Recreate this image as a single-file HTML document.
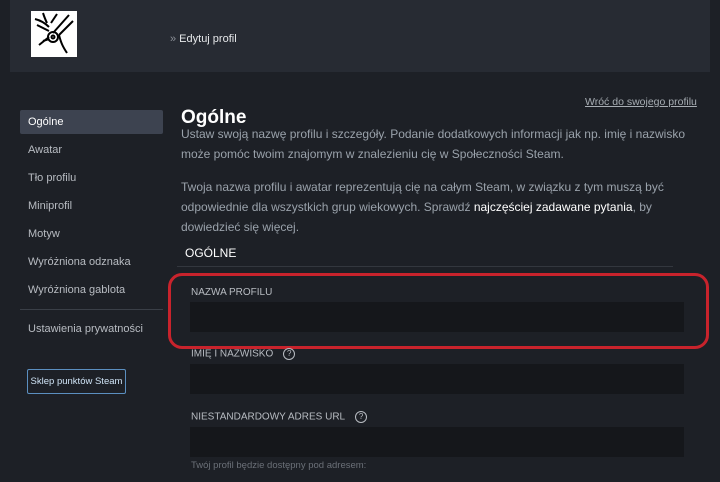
<!DOCTYPE html>
<html><head><meta charset="utf-8"><style>
*{margin:0;padding:0;box-sizing:border-box}
body{width:720px;height:482px;background:#1d2026;font-family:"Liberation Sans",sans-serif;position:relative;overflow:hidden;color:#acb2b8}
.a{position:absolute;white-space:nowrap}
.hdr{left:10px;top:0;width:700px;height:72px;background:#272b33}
.av{left:31px;top:11px;width:46px;height:46px;background:#fff}
.nav{font-size:11px;color:#b8bcc2;left:28px}
.sel{left:20px;top:110px;width:143px;height:24px;background:#3d4350;border-radius:2px}
.p{font-size:12px;color:#9aa2ab;left:181px;line-height:20px}
.lab{font-size:10px;color:#b8bcc2;left:191px}
.in{left:190px;width:494px;height:30px;background:#15171b}
.q{display:inline-block;width:12px;height:12px;border:1px solid #b8bcc2;border-radius:50%;font-size:8px;text-align:center;line-height:10px;margin-left:10px;vertical-align:middle}
</style></head><body>
<div class="a hdr"></div>
<div class="a av"><svg width="46" height="46" viewBox="0 0 46 46" fill="none" stroke="#000" stroke-width="2"><path d="M4 8q8 2 14 8M6 14l12 6M12 2q2 6 4 10M26 3l-6 9M38 4L22 22M42 10L28 24M8 34l10-8M28 24c2 8 4 12 8 18M12 30l6-2"/><circle cx="22" cy="26" r="5"/><circle cx="22" cy="26" r="1.5"/></svg></div>
<div class="a" style="left:170px;top:33px;font-size:11px;color:#e6e8ea"><span style="color:#8a8f96">»</span> Edytuj profil</div>
<div class="a sel"></div>
<div class="a nav" style="top:116px;color:#fff">Ogólne</div>
<div class="a nav" style="top:144px">Awatar</div>
<div class="a nav" style="top:172px">Tło profilu</div>
<div class="a nav" style="top:200px">Miniprofil</div>
<div class="a nav" style="top:228px">Motyw</div>
<div class="a nav" style="top:256px">Wyróżniona odznaka</div>
<div class="a nav" style="top:284px">Wyróżniona gablota</div>
<div class="a" style="left:20px;top:309px;width:143px;height:1px;background:#3a3f47"></div>
<div class="a nav" style="top:323px">Ustawienia prywatności</div>
<div class="a" style="left:27px;top:369px;width:99px;height:25px;border:1px solid #5b8fc0;border-radius:2px;font-size:9.5px;color:#cfe3f5;text-align:center;line-height:23px">Sklep punktów Steam</div>
<div class="a" style="left:585px;top:96px;font-size:10.5px;color:#a7adb3;text-decoration:underline">Wróć do swojego profilu</div>
<div class="a" style="left:181px;top:107px;font-size:19px;font-weight:bold;color:#fff">Ogólne</div>
<div class="a p" style="top:124px">Ustaw swoją nazwę profilu i szczegóły. Podanie dodatkowych informacji jak np. imię i nazwisko<br>może pomóc twoim znajomym w znalezieniu cię w Społeczności Steam.</div>
<div class="a p" style="top:177px">Twoja nazwa profilu i awatar reprezentują cię na całym Steam, w związku z tym muszą być<br>odpowiednie dla wszystkich grup wiekowych. Sprawdź <span style="color:#fff">najczęściej zadawane pytania</span>, by<br>dowiedzieć się więcej.</div>
<div class="a" style="left:185px;top:246px;font-size:12px;color:#fff">OGÓLNE</div>
<div class="a" style="left:177px;top:266px;width:496px;height:1px;background:#33373e"></div>
<div class="a" style="left:168px;top:273px;width:541px;height:76px;border:3px solid #c8232c;border-radius:14px"></div>
<div class="a lab" style="top:287px">NAZWA PROFILU</div>
<div class="a in" style="top:302px"></div>
<div class="a lab" style="top:348px">IMIĘ I NAZWISKO<span class="q">?</span></div>
<div class="a in" style="top:364px"></div>
<div class="a lab" style="top:411px">NIESTANDARDOWY ADRES URL<span class="q">?</span></div>
<div class="a in" style="top:427px"></div>
<div class="a" style="left:191px;top:460px;font-size:9.5px;color:#6b7078">Twój profil będzie dostępny pod adresem:</div>
</body></html>
